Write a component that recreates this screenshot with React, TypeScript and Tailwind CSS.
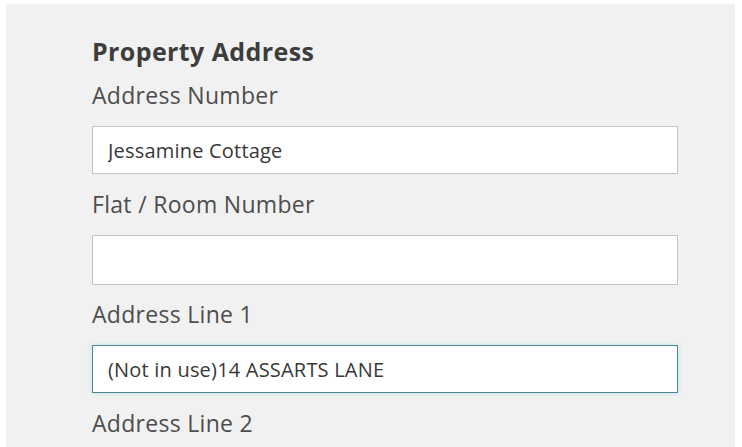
const fields = [
  { label: "Address Number", value: "Jessamine Cottage", h: "h-[48px]", gap: "mt-[13px]", focus: false },
  { label: "Flat / Room Number", value: "", h: "h-[50px]", gap: "mt-[15px]", focus: false },
  { label: "Address Line 1", value: "(Not in use)14 ASSARTS LANE", h: "h-[48px]", gap: "mt-[14px]", focus: true },
];

const App = () => {
  return (
    <div className="w-[742px] h-[447px] bg-white pl-[6px] pt-[4px] pr-[7px] overflow-hidden font-['Open_Sans',sans-serif]">
      <div className="w-full h-full bg-[#f1f1f1] pl-[86px] pr-[57px] pt-[31px]">
        <h2 className="text-[25px] leading-[32px] tracking-[0.4px] font-bold text-[#3d3d3d]">Property Address</h2>

        {fields.map((f) => (
          <div key={f.label} className={f.gap}>
            <label className="block text-[23px] leading-[30px] tracking-[0.3px] text-[#4d4d4d]">{f.label}</label>
            <input
              readOnly
              value={f.value}
              className={`mt-[16px] block w-[586px] ${f.h} bg-white px-[15px] text-[20px] leading-[26px] tracking-[0.2px] text-[#383838] outline-none border ${
                f.focus
                  ? "border-[#4b8790] shadow-[0_0_5px_rgba(140,210,225,0.45)]"
                  : "border-[#c3c3c3]"
              }`}
            />
          </div>
        ))}

        <div className="mt-[15px]">
          <label className="block text-[23px] leading-[30px] tracking-[0.3px] text-[#4d4d4d]">Address Line 2</label>
        </div>
      </div>
    </div>
  );
};

export default App;
